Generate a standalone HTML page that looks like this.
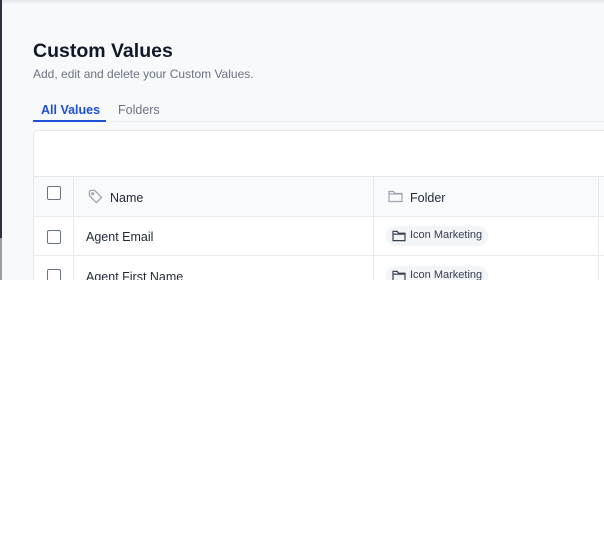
<!DOCTYPE html><html><head><style>
body{margin:0;width:604px;height:555px;background:#fff;font-family:"Liberation Sans",sans-serif;overflow:hidden;position:relative}
.clip{position:absolute;left:0;top:0;width:604px;height:280px;overflow:hidden;background:#f8f9fb}
.lb{position:absolute;left:0;top:0;width:2px;height:238px;background:#2d3142}
.lb2{position:absolute;left:0;top:238px;width:2px;height:42px;background:#9a9ca3}
.top{position:absolute;left:2px;top:0;right:0;height:5px;background:linear-gradient(#e4e5e8,#f8f9fb)}
h1{position:absolute;left:33px;top:40px;margin:0;font-size:19.5px;font-weight:bold;color:#111827}
.sub{position:absolute;left:33px;top:67px;font-size:12px;color:#6b7280}
.tab{position:absolute;top:103px;font-size:12.5px}
.ul{position:absolute;left:33px;top:120px;width:73px;height:2px;background:#1d4ed8}
.tl{position:absolute;left:33px;top:121px;right:0;height:1px;background:#eceef1}
.card{position:absolute;left:33px;top:130px;width:600px;height:200px;background:#fff;border:1px solid #e5e7eb;border-radius:4px}
.hdr{position:absolute;left:34px;top:176px;right:0;height:40px;background:#f9fafb;border-top:1px solid #e5e7eb}
.hl{position:absolute;left:34px;right:0;height:1px;background:#e8eaed}
.vl{position:absolute;top:176px;height:110px;width:1px;background:#e8eaed}
.cb{position:absolute;left:47px;width:12px;height:12px;border:1px solid #6b7280;border-radius:2px;background:#fff}
.t{position:absolute;font-size:12.5px;color:#1f2937}
.pill{position:absolute;left:386px;height:20px;width:102px;border-radius:10px;background:#f3f4f6;font-size:11px;color:#374151}
.pill span{position:absolute;left:24px;top:3px}
.pill svg{position:absolute;left:6px;top:4px}
</style></head><body>
<div class="clip">
<div class="lb"></div><div class="lb2"></div><div class="top"></div>
<h1>Custom Values</h1>
<div class="sub">Add, edit and delete your Custom Values.</div>
<div class="tab" style="left:41px;color:#1d4ed8;font-weight:bold">All Values</div>
<div class="tab" style="left:118px;color:#6b7280">Folders</div>
<div class="tl"></div><div class="ul"></div>
<div class="card"></div>
<div class="hdr"></div>
<div class="hl" style="top:216px"></div>
<div class="hl" style="top:255px"></div>
<div class="vl" style="left:73px"></div>
<div class="vl" style="left:373px"></div>
<div class="vl" style="left:598px"></div>
<div class="cb" style="top:186px"></div>
<div class="cb" style="top:230px"></div>
<div class="cb" style="top:269px"></div>
<svg style="position:absolute;left:88px;top:189px" width="15" height="15" viewBox="0 0 16 16" fill="none" stroke="#9ca3af" stroke-width="1.3"><path d="M1.5 2.5v4.5l7.5 7.5 5.5-5.5-7.5-7.5H2.5z"/><circle cx="5" cy="5" r="1"/></svg>
<div class="t" style="left:110px;top:191px">Name</div>
<svg style="position:absolute;left:388px;top:190px" width="15" height="13" viewBox="0 0 15 13" fill="none" stroke="#9ca3af" stroke-width="1.2"><path d="M1 2.5V11.5h13V3.5H7L5.5 1.5H1z"/><path d="M1 4h13"/></svg>
<div class="t" style="left:410px;top:191px">Folder</div>
<div class="t" style="left:86px;top:230px">Agent Email</div>
<div class="t" style="left:86px;top:270px">Agent First Name</div>
<div class="pill" style="top:226px"><svg width="14" height="12" viewBox="0 0 15 13" fill="none" stroke="#374151" stroke-width="1.3"><path d="M1 2V11.5h13V3.5H7L5.5 1.5H1z"/><path d="M1 4.5h13"/></svg><span>Icon Marketing</span></div>
<div class="pill" style="top:266px"><svg width="14" height="12" viewBox="0 0 15 13" fill="none" stroke="#374151" stroke-width="1.3"><path d="M1 2V11.5h13V3.5H7L5.5 1.5H1z"/><path d="M1 4.5h13"/></svg><span>Icon Marketing</span></div>
</div>
</body></html>
